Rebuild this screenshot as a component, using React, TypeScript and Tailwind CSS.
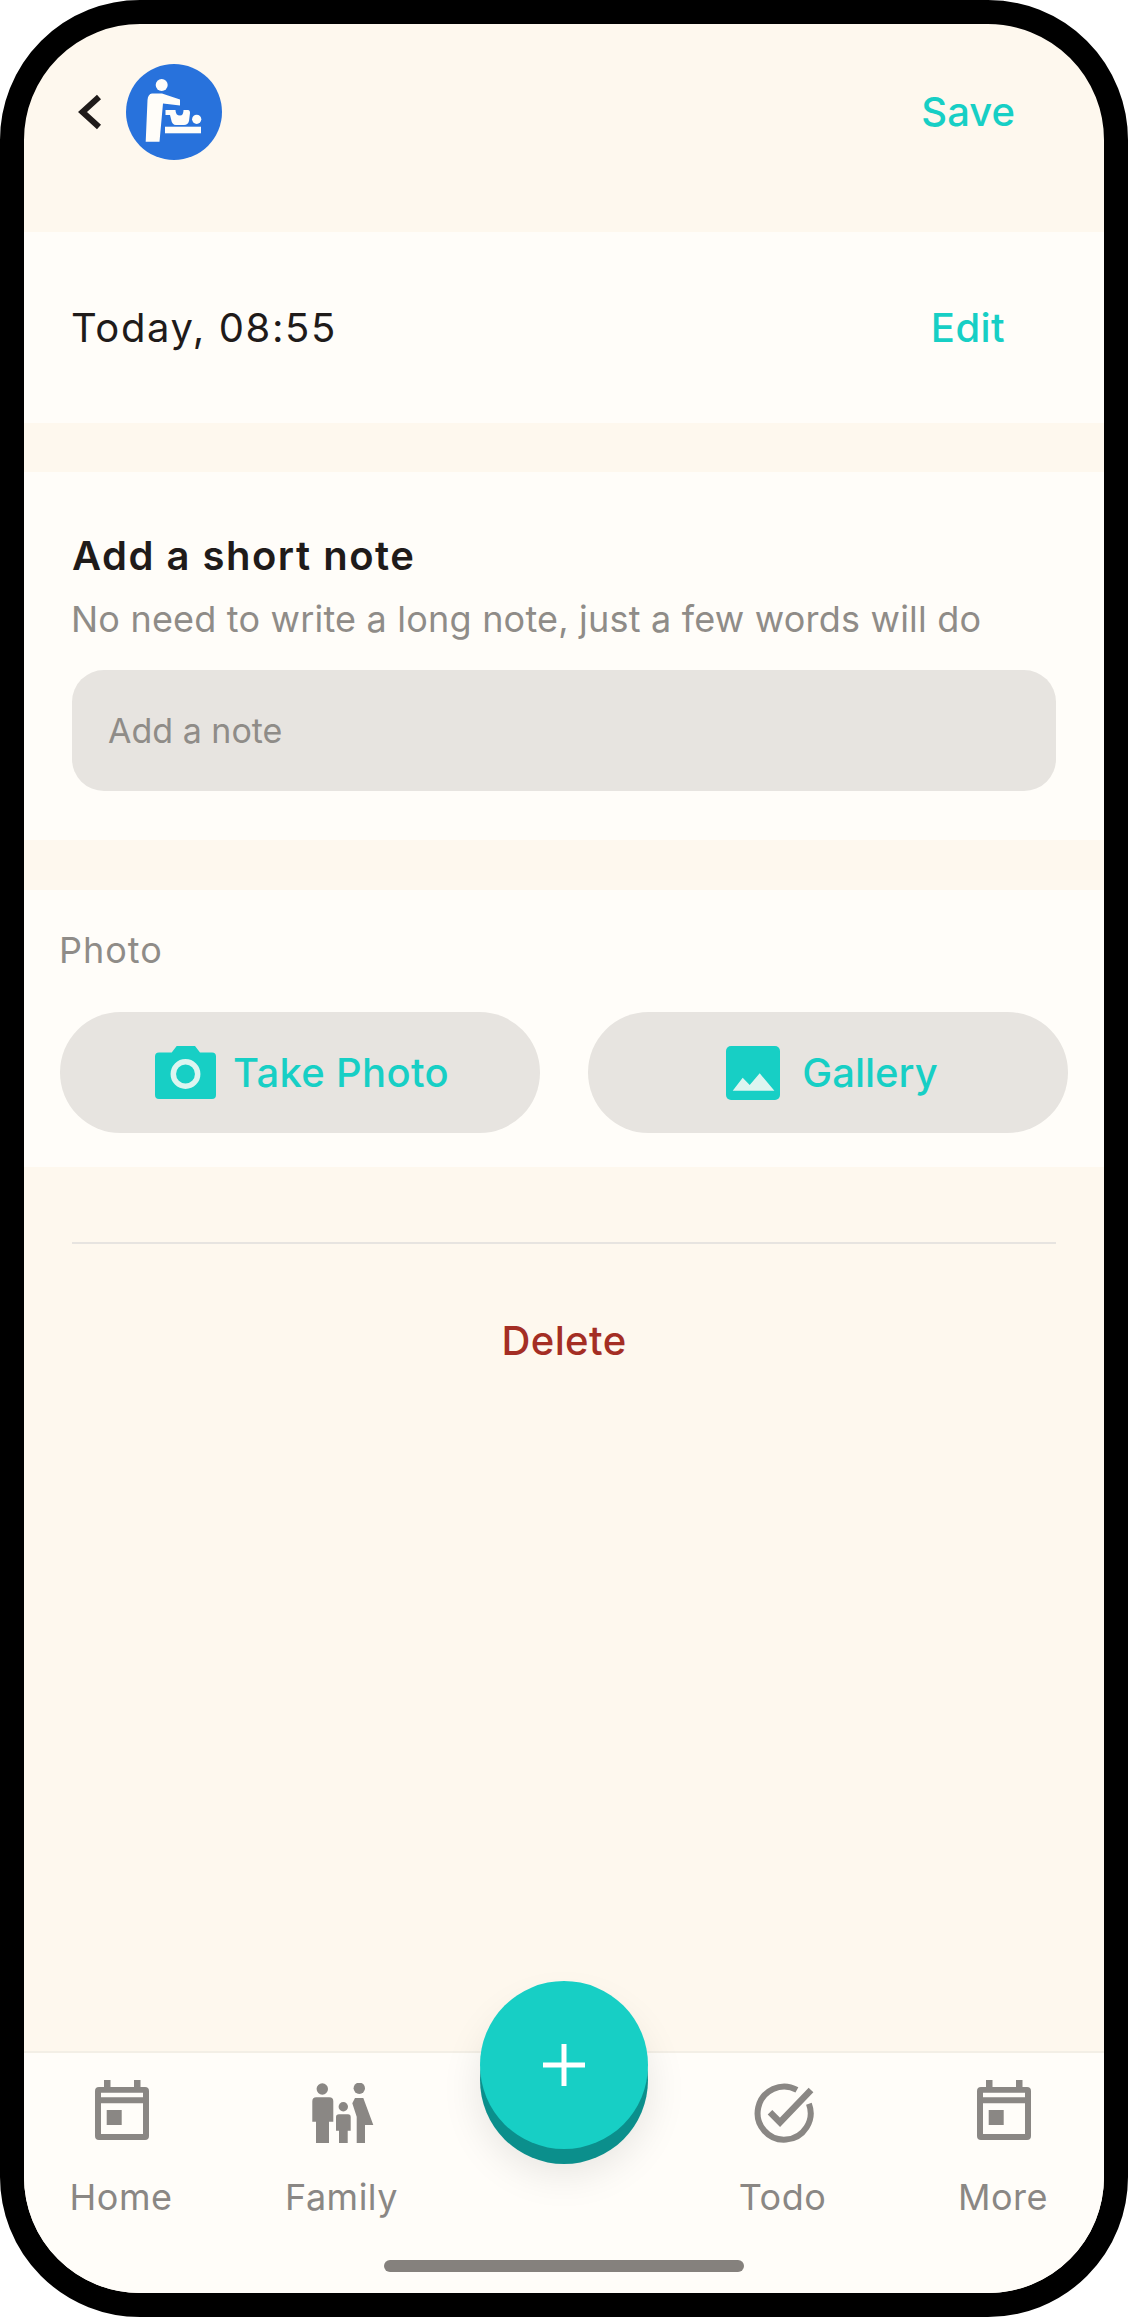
function BackChevron() {
  return (
    <svg viewBox="0 0 26 36" className="h-9 w-[26px] shrink-0" fill="none" stroke="#1F1B1A" strokeWidth="6">
      <path d="M23 3 L6.5 18 L23 33" />
    </svg>
  )
}

function BabyChangeAvatar() {
  return (
    <svg viewBox="0 0 96 96" className="h-24 w-24 shrink-0">
      <circle cx="48" cy="48" r="48" fill="#2872DC" />
      <g fill="#FFFDF9">
        <circle cx="35.7" cy="21" r="6" />
        <path d="M26 29.5 H36 L54 35.5 V41.5 L37 39.5 L33.5 77.7 H19.7 L21.5 36 Q22 30 26 29.5 Z" />
        <path d="M39.5 46 H49.5 Q49.5 51.5 54 51.5 Q57.5 51.5 57.5 46 H62 Q64 46 64 49 L63 57 Q62 61 58 61 H50 Q46 61 45 55 L44 51 H39.5 Z" />
        <circle cx="70.7" cy="55.3" r="4.6" />
        <rect x="39" y="62.7" width="36" height="6.6" />
      </g>
    </svg>
  )
}

function CameraIcon() {
  return (
    <svg viewBox="0 0 61 53" className="h-[53px] w-[61px] shrink-0">
      <path
        fill="#17CFC5"
        d="M4 6.6 H16.7 L21.7 0 H40 L45 6.6 H57 Q61 6.6 61 10.6 V49 Q61 53 57 53 H4 Q0 53 0 49 V10.6 Q0 6.6 4 6.6 Z"
      />
      <circle cx="30.5" cy="28" r="12.2" fill="none" stroke="#DDF5F0" strokeWidth="5.5" />
    </svg>
  )
}

function GalleryIcon() {
  return (
    <svg viewBox="0 0 54 54" className="h-[54px] w-[54px] shrink-0">
      <rect width="54" height="54" rx="5" fill="#17CFC5" />
      <path fill="#DDF5F0" d="M6.7 44.7 L16.7 31.7 L23.7 39 L33.7 27.3 L48.4 44.7 Z" />
    </svg>
  )
}

function CalendarIcon() {
  return (
    <svg viewBox="0 0 54 60" className="mb-[3px] h-[60px] w-[54px]">
      <g fill="#8A8784">
        <rect x="9" y="0" width="6.5" height="8" />
        <rect x="39" y="0" width="6.5" height="8" />
        <path
          fillRule="evenodd"
          d="M4 7 H50 Q54 7 54 11 V56 Q54 60 50 60 H4 Q0 60 0 56 V11 Q0 7 4 7 Z M6 12.7 V17.3 H48 V12.7 Z M6 23.3 V54 H48 V23.3 Z"
        />
        <rect x="11.7" y="30" width="15" height="15" />
      </g>
    </svg>
  )
}

function FamilyIcon() {
  return (
    <svg viewBox="0 0 62 60" className="h-[60px] w-[62px]">
      <g fill="#8A8784">
        <circle cx="10.3" cy="6" r="5.7" />
        <path d="M4.3 14.3 H17.3 Q21.3 14.3 21.3 18.3 V38.7 H17 V60 H4 V38.7 H0.3 V18.3 Q0.3 14.3 4.3 14.3 Z" />
        <circle cx="31.3" cy="23.7" r="4.7" />
        <path d="M27 31.3 H36 Q38.7 31.3 38.7 34 V47.7 H35.7 V60 H27 V47.7 H24 V34 Q24 31.3 27 31.3 Z" />
        <circle cx="47.3" cy="5.3" r="5.7" />
        <path d="M43 15 H51.3 L61.3 42 H53 V60 H44.7 V33.7 L40.3 20.3 Z" />
      </g>
    </svg>
  )
}

function TodoIcon() {
  return (
    <svg viewBox="0 0 60 60" className="h-[60px] w-[60px]" fill="none" stroke="#8A8784" strokeWidth="6">
      <path d="M42.9 6.9 A26.5 26.5 0 1 0 54.9 20.7" />
      <path d="M16 29.3 L26 39.3 L57 7" strokeWidth="6.5" />
    </svg>
  )
}

const navItems = [
  { label: 'Home', icon: <CalendarIcon /> },
  { label: 'Family', icon: <FamilyIcon /> },
  null,
  { label: 'Todo', icon: <TodoIcon /> },
  { label: 'More', icon: <CalendarIcon /> },
]

export default function App() {
  return (
    <div className="bg-white font-['Inter',sans-serif]">
      <div className="relative flex h-[2317px] w-[1128px] flex-col overflow-hidden rounded-[140px] border-[24px] border-black bg-[#FEF8EE]">
        {/* header */}
        <div className="flex h-[208px] shrink-0 items-start justify-between pl-[52px] pr-[89px] pt-[40px]">
          <div className="flex items-center gap-6">
            <BackChevron />
            <BabyChangeAvatar />
          </div>
          <span className="mt-[24px] text-[40px] leading-[48px] font-medium text-[#17CFC5]">Save</span>
        </div>

        {/* date */}
        <div className="flex h-[191px] shrink-0 items-center justify-between bg-[#FFFDF9] pl-[48px] pr-[99px]">
          <span className="-ml-px text-[40px] leading-[48px] tracking-[1.6px] text-[#1F1B1A]">Today, 08:55</span>
          <span className="text-[40px] leading-[48px] font-medium tracking-[0.4px] text-[#17CFC5]">Edit</span>
        </div>

        {/* note */}
        <div className="mt-[49px] h-[368px] shrink-0 bg-[#FFFDF9] px-[48px] pt-[60px]">
          <h2 className="text-[40px] leading-[48px] font-semibold tracking-[1.5px] text-[#1F1B1A]">Add a short note</h2>
          <p className="-ml-px mt-[15px] text-[36px] leading-[48px] tracking-[0.2px] text-[#8F8C88]">
            No need to write a long note, just a few words will do
          </p>
          <div className="mt-[27px] flex h-[121px] items-center rounded-[32px] bg-[#E7E4E0] px-[36px] text-[34px] text-[#8F8C88]">
            Add a note
          </div>
        </div>

        {/* photo */}
        <div className="mt-[50px] h-[277px] shrink-0 bg-[#FFFDF9] px-[36px] pt-[40px]">
          <div className="-ml-px text-[36px] leading-[40px] tracking-[1px] text-[#8F8C88]">Photo</div>
          <div className="mt-[42px] flex gap-[48px]">
            <div className="flex h-[121px] w-[480px] items-center justify-center gap-[17px] rounded-full bg-[#E7E4E0] pl-[4px] text-[40px] font-medium tracking-[0.3px] text-[#17CFC5]">
              <CameraIcon />
              Take Photo
            </div>
            <div className="flex h-[121px] w-[480px] items-center justify-center gap-[22px] rounded-full bg-[#E7E4E0] pl-[8px] text-[40px] font-medium text-[#17CFC5]">
              <GalleryIcon />
              Gallery
            </div>
          </div>
        </div>

        <div className="mx-[48px] mt-[75px] h-[2px] shrink-0 bg-[#E7E4E0]" />
        <div className="mt-[73px] text-center text-[40px] leading-[48px] font-medium tracking-[0.4px] text-[#A42E24]">Delete</div>

        <div className="flex-1" />

        {/* bottom nav */}
        <div className="relative h-[242px] shrink-0 border-t-2 border-[#F3EFE6] bg-[#FFFDF9]">
          <div className="grid grid-cols-[repeat(5,196px)] gap-x-[24.5px] pt-[27px]">
            {navItems.map((item, i) =>
              item ? (
                <div key={item.label} className="flex flex-col items-center">
                  <div className="flex h-[63px] items-end">{item.icon}</div>
                  <span className="mt-[32px] -translate-x-px text-[36px] leading-[44px] tracking-[0.5px] text-[#8A8784]">{item.label}</span>
                </div>
              ) : (
                <div key={i} />
              ),
            )}
          </div>
          <div className="absolute bottom-[21px] left-[360px] h-[12px] w-[360px] rounded-full bg-[#85817D]" />
        </div>

        {/* add button */}
        <div className="absolute left-[456px] top-[1957px] flex h-[168px] w-[168px] items-center justify-center rounded-full bg-[#17CFC5] shadow-[0_15px_0_#0B8F8C,0_24px_40px_rgba(0,0,0,0.1)]">
          <svg viewBox="0 0 42 42" className="h-[42px] w-[42px]" stroke="#FFFFFF" strokeWidth="5">
            <path d="M21 0 V42 M0 21 H42" />
          </svg>
        </div>
      </div>
    </div>
  )
}
